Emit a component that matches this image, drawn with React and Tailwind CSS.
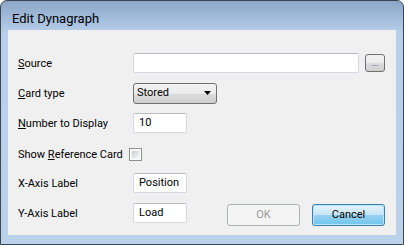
import React from "react";

const font = { fontFamily: 'Roboto, "Noto Sans", sans-serif' };

function TextBox({ w, value }) {
  return (
    <div
      className={`h-[20px] ${w} rounded-[2px] border border-[#d5d9de] border-t-[#b9bdc2] bg-white flex items-center pl-[5px] text-[11px] text-black`}
    >
      {value}
    </div>
  );
}

function Label({ children }) {
  return <div className="w-[115px] shrink-0 text-[11px] text-black leading-none">{children}</div>;
}

export default function App() {
  return (
    <div className="w-[404px] h-[245px] overflow-hidden" style={font}>
      <div className="w-[404px] h-[245px] rounded-t-[7px] border border-[#3d4650] bg-[linear-gradient(to_bottom,#8ca6c7_0px,#a9c2df_22px,#b8cfe9_32px,#bad2ea_100%)] flex flex-col">
        <div className="h-[29px] flex items-center pl-[11px] pt-[6px] text-[13px] text-black">
          Edit Dynagraph
        </div>
        <div className="mx-[7px] h-[205px] bg-[#f0f0f0] flex flex-col pl-[10px] pr-[11px] pt-[23px]">
          {/* Source */}
          <div className="h-[20px] flex items-center">
            <Label>
              <span className="underline">S</span>ource
            </Label>
            <TextBox w="w-[226px]" value="" />
            <div className="ml-[6px] w-[20px] h-[18px] rounded-[3px] border border-[#707070] bg-[linear-gradient(to_bottom,#f2f2f2,#ebebeb_50%,#dddddd_51%,#cfcfcf)] flex items-end justify-center pb-[3px] text-[9px] leading-none text-[#202060]">
              ...
            </div>
          </div>
          {/* Card type */}
          <div className="h-[20px] flex items-center mt-[10px]">
            <Label>
              <span className="underline">C</span>ard type
            </Label>
            <div className="w-[84px] h-[21px] rounded-[3px] border border-[#707070] bg-[linear-gradient(to_bottom,#f2f2f2,#ebebeb_50%,#dddddd_51%,#cfcfcf)] flex items-center pl-[3px] pr-[5px] text-[11px] text-black">
              <span className="flex-1">Stored</span>
              <svg width="7" height="4" viewBox="0 0 7 4">
                <path d="M0 0H7L3.5 4Z" fill="#000" />
              </svg>
            </div>
          </div>
          {/* Number to display */}
          <div className="h-[20px] flex items-center mt-[10px]">
            <Label>
              <span className="underline">N</span>umber to Display
            </Label>
            <TextBox w="w-[54px]" value="10" />
          </div>
          {/* Show Reference Card */}
          <div className="h-[20px] flex items-center mt-[11px]">
            <div className="text-[11px] text-black leading-none">
              Show <span className="underline">R</span>eference Card
            </div>
            <div className="ml-[6px] w-[13px] h-[13px] border border-[#8e8f8f] bg-white p-[1px]">
              <div className="w-full h-full bg-[linear-gradient(135deg,#cbcfd5,#f6f6f6)] border border-[#f4f4f4]" />
            </div>
          </div>
          {/* X-Axis */}
          <div className="h-[20px] flex items-center mt-[9px]">
            <Label>X-Axis Label</Label>
            <TextBox w="w-[54px]" value="Position" />
          </div>
          {/* Y-Axis + buttons */}
          <div className="h-[20px] flex items-center mt-[10px]">
            <Label>Y-Axis Label</Label>
            <TextBox w="w-[54px]" value="Load" />
            <div className="ml-auto flex gap-[12px] mt-[4px]">
              <div className="w-[73px] h-[22px] rounded-[3px] border border-[#adb2b5] bg-[#f4f4f4] flex items-center justify-center text-[11px] text-[#9a9a9a]">
                OK
              </div>
              <div className="w-[73px] h-[22px] rounded-[3px] border border-[#3c7fb1] bg-[linear-gradient(to_bottom,#e5f4fc,#c4e5f6_50%,#98d1ef_51%,#6ec6ee)] shadow-[inset_0_0_0_1px_#b8e6fb] flex items-center justify-center text-[11px] text-black">
                Cancel
              </div>
            </div>
          </div>
        </div>
      </div>
    </div>
  );
}
